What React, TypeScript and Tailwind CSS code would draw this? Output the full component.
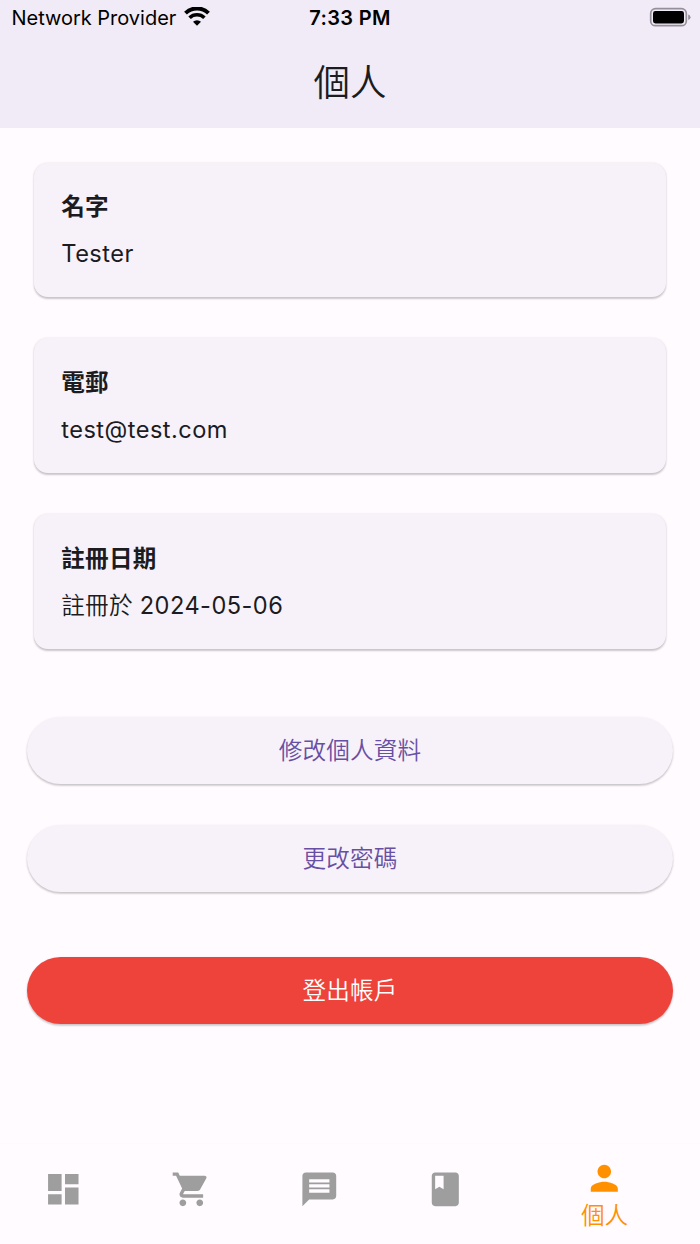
import type { ReactNode } from "react";

function Icon({ children, className = "" }: { children: ReactNode; className?: string }) {
  return (
    <svg viewBox="0 0 24 24" fill="currentColor" className={`block h-[40.6px] w-[40.6px] shrink-0 ${className}`}>
      {children}
    </svg>
  );
}

function StatusBar() {
  return (
    <div className="grid h-9 grid-cols-3 items-center pl-[11.5px] pr-[9px] text-black">
      <div className="flex items-center gap-[8px]">
        <span className="whitespace-nowrap text-[20px] leading-9 tracking-[-0.02px]">Network Provider</span>
        <svg viewBox="0 0 26 19" className="mt-[-3px] h-[19px] w-[26px] shrink-0" fill="none" stroke="currentColor">
          <path d="M1.5 6.1 A16.5 16.5 0 0 1 24.5 6.1" strokeWidth="4" />
          <path d="M5.6 10.7 A10.7 10.7 0 0 1 20.4 10.7" strokeWidth="3.6" />
          <path d="M9 14.8 A5.8 5.8 0 0 1 17 14.8 L13 18.8Z" fill="currentColor" stroke="none" />
        </svg>
      </div>
      <div className="pr-[2.5px] text-center text-[20px] font-semibold leading-9 tracking-[0.35px]">7:33 PM</div>
      <svg viewBox="0 0 42 20" className="mt-[-2px] h-5 w-[42px] justify-self-end">
        <rect x="1.7" y="1.7" width="35.6" height="17" rx="4.8" fill="none" stroke="#958f99" strokeWidth="1.7" />
        <rect x="4" y="4" width="31" height="12.5" rx="2.4" fill="black" />
        <path d="M39.2 7.5 Q41.5 8.2 41.5 10.2 Q41.5 12.2 39.2 13Z" fill="#958f99" />
      </svg>
    </div>
  );
}

function InfoCard({ label, children }: { label: string; children: ReactNode }) {
  return (
    <section className="h-[134.7px] rounded-[14px] bg-[#f7f2f9] px-[27.3px] pt-[27.8px] shadow-[0_1.7px_2px_rgba(0,0,0,0.18),0_0.5px_3px_rgba(0,0,0,0.08)]">
      <h2 className="h-[34px] text-[23.6px] font-bold leading-[34px] tracking-[0.2px]">{label}</h2>
      <p className="mt-[12.8px] h-[34px] text-[23.6px] leading-[34px] tracking-[0.45px]">{children}</p>
    </section>
  );
}

function ActionButton({ label, className }: { label: string; className: string }) {
  return (
    <button
      type="button"
      className={`block h-[67.5px] w-full rounded-full pt-[1.5px] text-[23.6px] font-[350] leading-[34px] tracking-[0.17px] shadow-[0_1.7px_2px_rgba(0,0,0,0.18),0_0.5px_3px_rgba(0,0,0,0.08)] ${className}`}
    >
      {label}
    </button>
  );
}

function BottomNav() {
  return (
    <nav className="grid h-[100px] grid-cols-[127.5px_127.5px_128px_125px_193px] items-center pb-[9px] text-[#9e9e9e] shadow-[0_-1px_2px_rgba(0,0,0,0.012)]">
      <div className="flex justify-center">
        <Icon><path d="M3 13h8V3H3v10zm0 8h8v-6H3v6zm10 0h8V11h-8v10zm0-18v6h8V3h-8z" /></Icon>
      </div>
      <div className="flex justify-center">
        <Icon><path d="M7 18c-1.1 0-1.99.9-1.99 2S5.9 22 7 22s2-.9 2-2-.9-2-2-2zM1 2v2h2l3.6 7.59-1.35 2.45c-.16.28-.25.61-.25.96 0 1.1.9 2 2 2h12v-2H7.42c-.14 0-.25-.11-.25-.25l.03-.12.9-1.63h7.45c.75 0 1.41-.41 1.75-1.03l3.58-6.49c.08-.14.12-.31.12-.48 0-.55-.45-1-1-1H5.21l-.94-2H1zm16 16c-1.1 0-1.99.9-1.99 2s.89 2 1.99 2 2-.9 2-2-.9-2-2-2z" /></Icon>
      </div>
      <div className="flex justify-center">
        <Icon><path d="M20 2H4c-1.1 0-1.99.9-1.99 2L2 22l4-4h14c1.1 0 2-.9 2-2V4c0-1.1-.9-2-2-2zM6 6h12v2H6V6zm12 8H6v-2h12v2zm0-3H6V9h12v2z" /></Icon>
      </div>
      <div className="flex justify-center">
        <Icon><path d="M18 2H6c-1.1 0-2 .9-2 2v16c0 1.1.9 2 2 2h12c1.1 0 2-.9 2-2V4c0-1.1-.9-2-2-2zM6 4h5v8l-2.5-1.5L6 12V4z" /></Icon>
      </div>
      <div className="flex flex-col items-center pt-[11px] text-[#ff9100]">
        <Icon><path d="M12 12c2.21 0 4-1.79 4-4s-1.79-4-4-4-4 1.79-4 4 1.79 4 4 4zm0 2c-2.67 0-8 1.34-8 4v2h16v-2c0-2.66-5.33-4-8-4z" /></Icon>
        <span className="h-[34px] pt-[1px] text-[23.6px] font-[350] leading-[34px]">個人</span>
      </div>
    </nav>
  );
}

export default function App() {
  return (
    <div className="flex h-[1244px] w-[700px] flex-col overflow-hidden bg-[#fffbff] font-['Inter','Noto_Sans_CJK_TC',sans-serif] text-[#1c1b1f]">
      <header className="h-[128.4px] shrink-0 bg-[#f0ebf6]">
        <StatusBar />
        <h1 className="pt-[20px] text-center text-[36.5px] font-[350] leading-[54px]">個人</h1>
      </header>
      <main className="flex min-h-0 flex-1 flex-col pt-[34.3px]">
        <div className="flex flex-col gap-[41.1px] px-[34px]">
          <InfoCard label="名字">Tester</InfoCard>
          <InfoCard label="電郵">test@test.com</InfoCard>
          <InfoCard label="註冊日期">
            <span className="font-[350] tracking-[0.2px]">註冊於</span> 2024-05-06
          </InfoCard>
        </div>
        <div className="flex flex-col px-[27px] pt-[67.6px]">
          <ActionButton label="修改個人資料" className="bg-[#f7f2f9] text-[#6750a4]" />
          <ActionButton label="更改密碼" className="mt-[40.5px] bg-[#f7f2f9] text-[#6750a4]" />
          <ActionButton label="登出帳戶" className="mt-[64.5px] bg-[#ee433a] text-white" />
        </div>
      </main>
      <BottomNav />
    </div>
  );
}
